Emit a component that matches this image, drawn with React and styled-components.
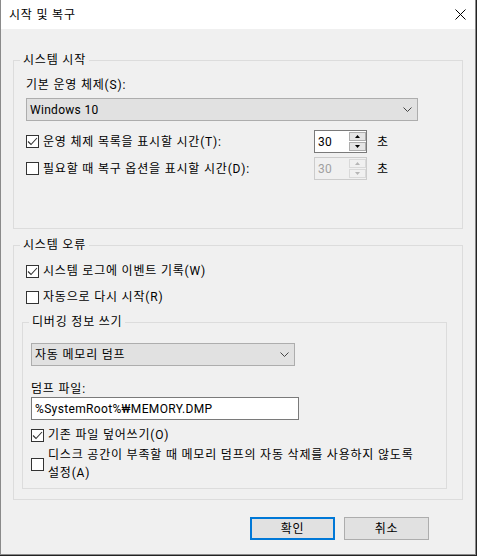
import React from 'react';
import styled, { createGlobalStyle } from 'styled-components';

const GlobalStyle = createGlobalStyle`
  html, body {
    margin: 0;
    padding: 0;
    background: #232323;
  }
  body {
    font-family: Roboto, "Noto Sans CJK KR", sans-serif;
    font-size: 12px;
    letter-spacing: 0.8px;
    color: #000;
  }
`;

const Window = styled.div`
  width: 476px;
  height: 555px;
  box-sizing: border-box;
  border: 1px solid #8a8a8a;
  border-top: none;
  background: #f0f0f0;
  display: flex;
  flex-direction: column;
`;

const TitleBar = styled.div`
  height: 29px;
  flex: none;
  background: #fff;
  display: flex;
  align-items: center;
  justify-content: space-between;
  padding: 0 9px 0 8px;
  line-height: 16px;
`;

const Body = styled.div`
  padding: 23px 12px 0;
  display: flex;
  flex-direction: column;
`;

const Group = styled.fieldset`
  margin: ${p => p.$margin || '0'};
  border: 1px solid #dcdcdc;
  padding: 0 ${p => p.$px}px ${p => p.$pb}px;
  min-width: 0;
  display: flex;
  flex-direction: column;
  align-items: flex-start;
`;

const InnerGroup = styled(Group)`
  align-self: stretch;
`;

const Legend = styled.legend`
  padding: 0 3px;
  margin-left: ${p => p.$ml}px;
  line-height: 16px;
`;

const Text = styled.div`
  line-height: ${p => p.$lh || 16}px;
  margin-top: ${p => p.$mt || 0}px;
`;

const Latin = styled.span`
  letter-spacing: ${p => p.$ls || 0}px;
`;

const Select = styled.div`
  width: ${p => p.$w}px;
  height: 23px;
  box-sizing: border-box;
  margin-top: ${p => p.$mt}px;
  border: 1px solid #adadad;
  background: #e1e1e1;
  display: flex;
  align-items: center;
  justify-content: space-between;
  padding: 0 5px 0 3px;
  line-height: 16px;
`;

const Input = styled.div`
  width: 268px;
  height: 23px;
  box-sizing: border-box;
  border: 1px solid #7a7a7a;
  background: #fff;
  display: flex;
  align-items: center;
  padding: 0 3px;
  line-height: 16px;
  letter-spacing: 0.35px;
`;

const CheckRow = styled.div`
  display: flex;
  align-items: center;
  gap: 4px;
  margin-top: ${p => p.$mt || 0}px;
  line-height: ${p => p.$lh || 16}px;
  white-space: nowrap;
`;

const Box = styled.span`
  width: 13px;
  height: 13px;
  flex: none;
  box-sizing: border-box;
  border: 1px solid #333;
  background: #fff;
  display: flex;
  align-items: center;
  justify-content: center;
`;

const SpinRow = styled.div`
  display: grid;
  grid-template-columns: 288px 53px auto;
  align-items: center;
  margin-top: ${p => p.$mt}px;
`;

const Spin = styled.div`
  width: 53px;
  height: 23px;
  box-sizing: border-box;
  border: 1px solid ${p => (p.$disabled ? '#cccccc' : '#7a7a7a')};
  background: ${p => (p.$disabled ? '#f0f0f0' : '#fff')};
  color: ${p => (p.$disabled ? '#a0a0a0' : '#000')};
  display: flex;
  line-height: 16px;
  letter-spacing: 0.3px;
`;

const SpinValue = styled.div`
  flex: 1;
  display: flex;
  align-items: center;
  padding-left: 3px;
`;

const SpinButtons = styled.div`
  width: 17px;
  display: flex;
  flex-direction: column;
  gap: 1px;
  padding: 1px 0;
`;

const SpinButton = styled.div`
  flex: 1;
  box-sizing: border-box;
  border: 1px solid ${p => (p.$disabled ? '#d9d9d9' : '#adadad')};
  background: ${p => (p.$disabled ? '#f0f0f0' : '#e5e5e5')};
  display: flex;
  align-items: center;
  justify-content: center;
`;

const Unit = styled.span`
  margin-left: 10px;
  line-height: 16px;
`;

const ButtonRow = styled.div`
  display: flex;
  justify-content: flex-end;
  gap: 9px;
  margin-top: 17px;
  padding-right: 34px;
`;

const Button = styled.button`
  width: 85px;
  height: 23px;
  box-sizing: border-box;
  padding: 0;
  border: ${p => (p.$primary ? '2px solid #0078d7' : '1px solid #adadad')};
  background: #e1e1e1;
  font: inherit;
  letter-spacing: inherit;
  line-height: 16px;
  color: #000;
`;

function Chevron() {
  return (
    <svg width="9" height="5" viewBox="0 0 9 5">
      <path d="M0.5 0.5 L4.5 4.5 L8.5 0.5" fill="none" stroke="#444" strokeWidth="1" />
    </svg>
  );
}

function Check({ checked }) {
  return (
    <Box>
      {checked && (
        <svg width="11" height="11" viewBox="0 0 11 11">
          <path d="M1 5.5 L4 8.5 L10 2" fill="none" stroke="#333" strokeWidth="1.1" />
        </svg>
      )}
    </Box>
  );
}

function Arrow({ down, disabled }) {
  return (
    <svg width="5" height="3" viewBox="0 0 5 3">
      <path
        d={down ? 'M0 0 L5 0 L2.5 3 Z' : 'M0 3 L5 3 L2.5 0 Z'}
        fill={disabled ? '#b5b5b5' : '#000'}
      />
    </svg>
  );
}

function SpinBox({ value, disabled }) {
  return (
    <Spin $disabled={disabled}>
      <SpinValue>{value}</SpinValue>
      <SpinButtons>
        <SpinButton $disabled={disabled}><Arrow disabled={disabled} /></SpinButton>
        <SpinButton $disabled={disabled}><Arrow down disabled={disabled} /></SpinButton>
      </SpinButtons>
    </Spin>
  );
}

export default function App() {
  return (
    <>
      <GlobalStyle />
      <Window>
        <TitleBar>
          <span>시작 및 복구</span>
          <svg width="11" height="11" viewBox="0 0 11 11">
            <path d="M0.5 0.5 L10.5 10.5 M10.5 0.5 L0.5 10.5" stroke="#000" strokeWidth="1" />
          </svg>
        </TitleBar>
        <Body>
          <Group $px={12} $pb={48}>
            <Legend $ml={-6}>시스템 시작</Legend>
            <Text $mt={9}>기본 운영 체제(S):</Text>
            <Select $w={392} $mt={5}>
              <Latin $ls={0.3}>Windows 10</Latin>
              <Chevron />
            </Select>
            <SpinRow $mt={9}>
              <CheckRow>
                <Check checked />
                <span>운영 체제 목록을 표시할 시간(T):</span>
              </CheckRow>
              <SpinBox value="30" />
              <Unit>초</Unit>
            </SpinRow>
            <SpinRow $mt={4}>
              <CheckRow>
                <Check />
                <span>필요할 때 복구 옵션을 표시할 시간(D):</span>
              </CheckRow>
              <SpinBox value="30" disabled />
              <Unit>초</Unit>
            </SpinRow>
          </Group>

          <Group $px={12} $pb={10} $margin="8px 0 0">
            <Legend $ml={-6}>시스템 오류</Legend>
            <CheckRow $mt={10}>
              <Check checked />
              <span>시스템 로그에 이벤트 기록(W)</span>
            </CheckRow>
            <CheckRow $mt={10}>
              <Check />
              <span>자동으로 다시 시작(R)</span>
            </CheckRow>

            <InnerGroup $px={8} $pb={6} $margin="9px 3px 0 -4px">
              <Legend $ml={-2}>디버깅 정보 쓰기</Legend>
              <Select $w={264} $mt={13}>
                <span>자동 메모리 덤프</span>
                <Chevron />
              </Select>
              <Text $mt={16} $lh={15}>덤프 파일:</Text>
              <Input>%SystemRoot%₩MEMORY.DMP</Input>
              <CheckRow $mt={7}>
                <Check checked />
                <span>기존 파일 덮어쓰기(O)</span>
              </CheckRow>
              <CheckRow $mt={3} $lh={18}>
                <Check />
                <span>
                  디스크 공간이 부족할 때 메모리 덤프의 자동 삭제를 사용하지 않도록
                  <br />
                  설정(A)
                </span>
              </CheckRow>
            </InnerGroup>
          </Group>

          <ButtonRow>
            <Button $primary>확인</Button>
            <Button>취소</Button>
          </ButtonRow>
        </Body>
      </Window>
    </>
  );
}
